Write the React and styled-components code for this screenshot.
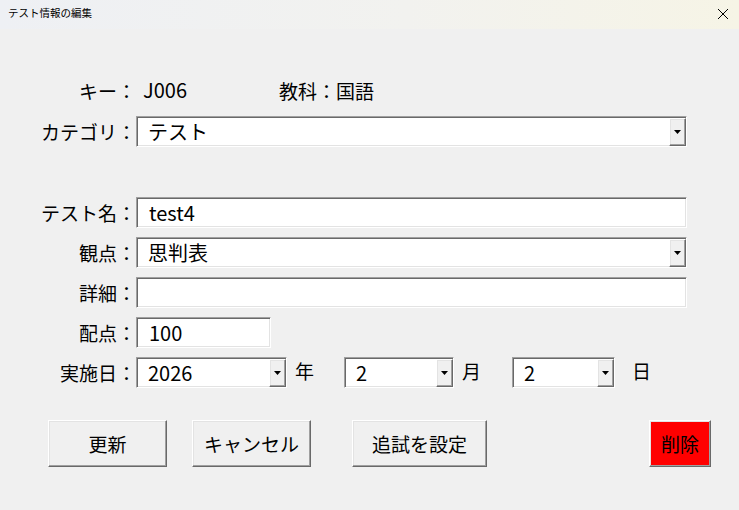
import styled, { createGlobalStyle, css } from "styled-components";

const GlobalStyle = createGlobalStyle`
    html, body {
        margin: 0;
        padding: 0;
        background: #f0f0f0;
    }
    body {
        font-family: "Noto Sans CJK JP", "Noto Sans", sans-serif;
        color: #000;
    }
`;

const sunken = css`
    box-sizing: border-box;
    background: #fff;
    border-top: 1px solid #a0a0a0;
    border-left: 1px solid #a0a0a0;
    border-bottom: 1px solid #fff;
    border-right: 1px solid #fff;
    box-shadow: inset 1px 1px 0 #696969, inset -1px -1px 0 #e3e3e3;
`;

const raised = css`
    box-sizing: border-box;
    border-top: 1px solid #fff;
    border-left: 1px solid #fff;
    border-right: 1px solid #696969;
    border-bottom: 1px solid #696969;
    box-shadow: inset -1px -1px 0 #a0a0a0, inset 1px 1px 0 #e3e3e3;
`;

export default function App() {
    return (
        <>
            <GlobalStyle />
            <Window>
                <TitleBar>
                    <Title>テスト情報の編集</Title>
                    <CloseIcon width="12" height="12" viewBox="0 0 12 12">
                        <path d="M1 1 L11 11 M11 1 L1 11" stroke="#000" strokeWidth="1" fill="none" />
                    </CloseIcon>
                </TitleBar>

                <Body>
                    <Row $height={24}>
                        <Label>キー：</Label>
                        <Info>
                            <KeyValue>J006</KeyValue>
                            <span>教科：国語</span>
                        </Info>
                    </Row>

                    <Row $top={14}>
                        <Label>カテゴリ：</Label>
                        <Combo value="テスト" />
                    </Row>

                    <Row $top={50}>
                        <Label>テスト名：</Label>
                        <TextBox>test4</TextBox>
                    </Row>

                    <Row $top={9}>
                        <Label>観点：</Label>
                        <Combo value="思判表" />
                    </Row>

                    <Row $top={9}>
                        <Label>詳細：</Label>
                        <TextBox />
                    </Row>

                    <Row $top={9}>
                        <Label>配点：</Label>
                        <TextBox $width={135}>100</TextBox>
                    </Row>

                    <Row $top={9}>
                        <Label>実施日：</Label>
                        <DateLine>
                            <Combo value="2026" width={151} />
                            <Unit $left={8} $width={49}>年</Unit>
                            <Combo value="2" width={110} />
                            <Unit $left={8} $width={50}>月</Unit>
                            <Combo value="2" width={103} />
                            <Unit $left={17}>日</Unit>
                        </DateLine>
                    </Row>

                    <Buttons>
                        <Button $width={119}>更新</Button>
                        <Button $width={119} $left={25}>キャンセル</Button>
                        <Button $width={135} $left={41}>追試を設定</Button>
                        <Button $width={62} $left={162} $danger>削除</Button>
                    </Buttons>
                </Body>
            </Window>
        </>
    );
}

function Combo({ value, width }) {
    return (
        <ComboBox $width={width}>
            <ComboText>{value}</ComboText>
            <DropButton>
                <svg width="7" height="4" viewBox="0 0 7 4">
                    <polygon points="0,0 7,0 3.5,4" fill="#000" />
                </svg>
            </DropButton>
        </ComboBox>
    );
}

const Window = styled.div`
    width: 739px;
    height: 510px;
    display: flex;
    flex-direction: column;
    background: #f0f0f0;
    overflow: hidden;
`;

const TitleBar = styled.div`
    height: 29px;
    flex-shrink: 0;
    display: flex;
    align-items: center;
    justify-content: space-between;
    padding: 0 8px 0 8px;
    background: linear-gradient(90deg, #eef0f4 0%, #f2f2ef 55%, #f6f4e6 100%);
`;

const Title = styled.span`
    font-size: 10.5px;
    line-height: 1;
    margin-top: -3px;
`;

const CloseIcon = styled.svg`
    margin-right: 2px;
    margin-top: -2px;
`;

const Body = styled.div`
    display: flex;
    flex-direction: column;
    padding: 49px 52px 0 0;
`;

const Row = styled.div`
    display: grid;
    grid-template-columns: 136px 1fr;
    align-items: center;
    height: ${(p) => p.$height || 31}px;
    margin-top: ${(p) => p.$top || 0}px;
`;

const Label = styled.div`
    font-size: 19px;
    line-height: 1;
    text-align: right;
    white-space: nowrap;
`;

const Info = styled.div`
    display: flex;
    align-items: center;
    font-size: 19px;
    line-height: 1;
`;

const KeyValue = styled.span`
    box-sizing: border-box;
    width: 143px;
    padding-left: 7px;
    font-size: 20px;
`;

const TextBox = styled.div`
    ${sunken};
    width: ${(p) => (p.$width ? `${p.$width}px` : "100%")};
    height: 31px;
    display: flex;
    align-items: center;
    padding-left: 12px;
    font-size: 20px;
    line-height: 1;
`;

const ComboBox = styled.div`
    ${sunken};
    width: ${(p) => (p.$width ? `${p.$width}px` : "100%")};
    height: 31px;
    display: flex;
    align-items: stretch;
    flex-shrink: 0;
`;

const ComboText = styled.div`
    flex: 1;
    display: flex;
    align-items: center;
    padding-left: 11px;
    font-size: 20px;
    line-height: 1;
`;

const DropButton = styled.div`
    ${raised};
    width: 17px;
    margin-top: 1px;
    background: #f0f0f0;
    display: flex;
    align-items: center;
    justify-content: center;
`;

const DateLine = styled.div`
    display: flex;
    align-items: center;
`;

const Unit = styled.span`
    box-sizing: border-box;
    flex-shrink: 0;
    margin-left: ${(p) => p.$left || 0}px;
    width: ${(p) => (p.$width ? `${p.$width}px` : "auto")};
    font-size: 19px;
    line-height: 1;
    margin-top: -4px;
`;

const Buttons = styled.div`
    display: flex;
    padding-left: 48px;
    margin-top: 32px;
`;

const Button = styled.button`
    ${raised};
    flex-shrink: 0;
    width: ${(p) => p.$width}px;
    height: 47px;
    margin-left: ${(p) => p.$left || 0}px;
    padding: 0;
    background: ${(p) => (p.$danger ? "#ff0000" : "#f0f0f0")};
    font-family: inherit;
    font-size: 19px;
    line-height: 1;
    color: #000;
`;
